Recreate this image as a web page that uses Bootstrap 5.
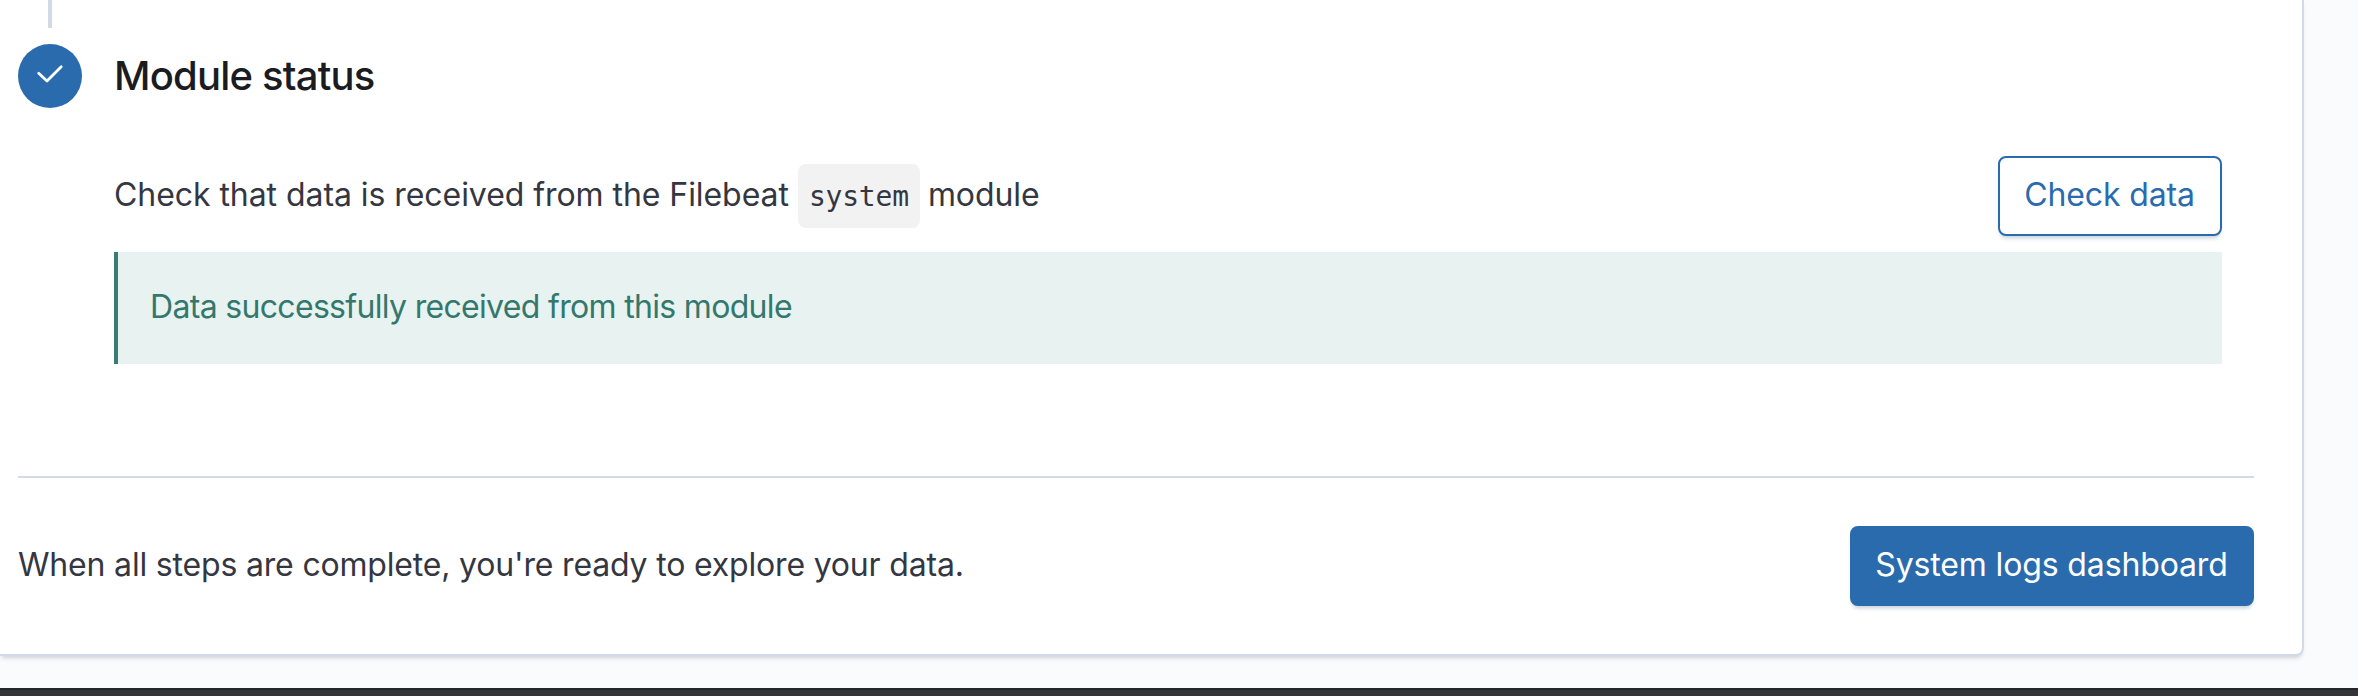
<!DOCTYPE html>
<html lang="en">
<head>
<meta charset="utf-8">
<title>Module status</title>
<link href="https://cdn.jsdelivr.net/npm/bootstrap@5.3.0/dist/css/bootstrap.min.css" rel="stylesheet">
<style>
html, body { height: 696px; overflow: hidden; }
body { background: #fafbfd; color: #343741; font: 400 32px/48px Inter, "Liberation Sans", sans-serif; letter-spacing: -.18px; }
.panel { width: 2304px; height: 656px; border: solid #d3dae6; border-width: 0 2px 2px 0; border-bottom-right-radius: 8px; padding: 0 48px 0 18px; box-shadow: 0 4px 4px -2px rgba(105,112,125,.3); }
.rail { width: 64px; margin-right: 32px; }
.rail-line { width: 4px; height: 28px; background: #d3dae6; margin-bottom: 16px; }
.rail-dot { width: 64px; height: 64px; background: #2a6bae; }
.step-body { padding: 44px 32px 0 0; height: 476px; }
.step-title { font-size: 40px; line-height: 64px; font-weight: 500; letter-spacing: -.8px; color: #1a1c21; margin-bottom: 48px; }
.step-text { letter-spacing: -.06px; }
.step-text > span, .finish > span { padding-bottom: 2px; }
.code-chip { font: 400 28px/48px "DejaVu Sans Mono", monospace; letter-spacing: -.2px; color: #343741; background: #f2f2f2; border-radius: 8px; padding: 9px 11px 7px; width: 122px; height: 64px; margin: 0 8px 0 9px; }
.act { height: 80px; border: 2px solid #2a6bae; border-radius: 8px; font-size: 32px; line-height: 48px; letter-spacing: -.14px; padding: 11px 1px 13px 0; box-shadow: 0 4px 4px -2px rgba(54,97,126,.3); }
.act-outline { width: 224px; color: #2a6bae; background: #fff; }
.act-fill { width: 404px; color: #fff; background: #2a6bae; }
.notice { height: 112px; margin-top: 16px; background: #e8f2f0; border-left: 4px solid #397d72; color: #34786d; padding: 0 0 2px 32px; letter-spacing: -.68px; }
.finish { border-top: 2px solid #d3dae6; padding-top: 48px; }
.dock { height: 8px; margin-top: 32px; background: #343539; border-top: 2px solid #252629; }
</style>
</head>
<body>
<main class="panel bg-white">
  <section class="d-flex">
    <div class="rail d-flex flex-column align-items-center flex-shrink-0">
      <div class="rail-line"></div>
      <div class="rail-dot rounded-circle">
        <svg class="d-block" width="64" height="64" viewBox="0 0 64 64" fill="none" stroke="#fff" stroke-width="2.8" stroke-linecap="round" stroke-linejoin="round" aria-hidden="true"><path d="M20.7 29.2 29 37 43.2 22.8"/></svg>
      </div>
    </div>
    <div class="step-body flex-grow-1">
      <h2 class="step-title">Module status</h2>
      <div class="d-flex justify-content-between align-items-center">
        <div class="step-text d-flex align-items-center"><span>Check that data is received from the Filebeat</span><code class="code-chip">system</code><span>module</span></div>
        <button type="button" class="btn act act-outline">Check data</button>
      </div>
      <div class="notice d-flex align-items-center">Data successfully received from this module</div>
    </div>
  </section>
  <footer class="finish d-flex justify-content-between align-items-center">
    <span>When all steps are complete, you're ready to explore your data.</span>
    <button type="button" class="btn act act-fill">System logs dashboard</button>
  </footer>
</main>
<div class="dock"></div>
<script src="https://cdn.jsdelivr.net/npm/bootstrap@5.3.0/dist/js/bootstrap.bundle.min.js"></script>
</body>
</html>
